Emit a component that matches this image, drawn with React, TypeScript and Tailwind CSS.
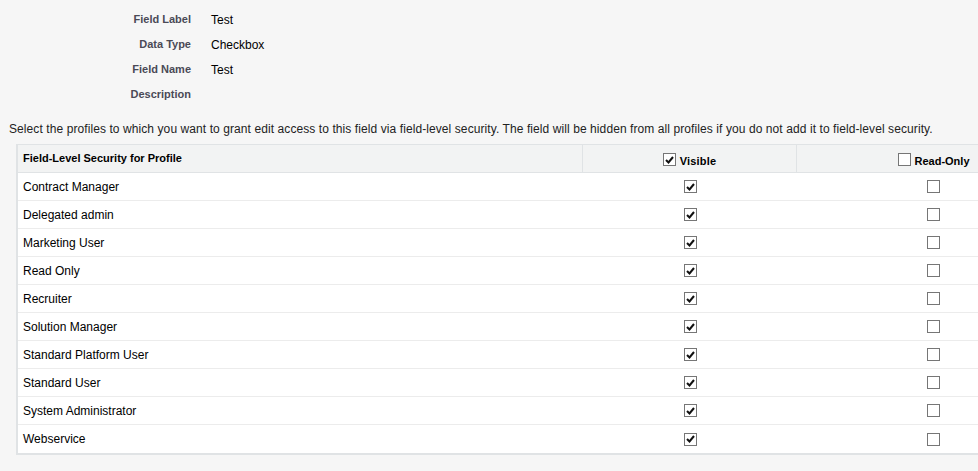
import React from "react";

const profiles = [
  "Contract Manager",
  "Delegated admin",
  "Marketing User",
  "Read Only",
  "Recruiter",
  "Solution Manager",
  "Standard Platform User",
  "Standard User",
  "System Administrator",
  "Webservice",
];

function Box({ checked }: { checked: boolean }) {
  return (
    <span className="inline-flex h-[13px] w-[13px] items-center justify-center border border-[#767676] bg-white">
      {checked && (
        <svg width="9" height="8" viewBox="0 0 9 8">
          <path d="M1 4 L3.5 6.5 L8 1" stroke="#111" strokeWidth="2" fill="none" />
        </svg>
      )}
    </span>
  );
}

export default function App() {
  const info: [string, string][] = [
    ["Field Label", "Test"],
    ["Data Type", "Checkbox"],
    ["Field Name", "Test"],
    ["Description", ""],
  ];
  return (
    <div
      className="h-[471px] w-[978px] overflow-hidden bg-[#f6f6f6] text-[12px] text-black"
      style={{ fontFamily: "Arial, 'Liberation Sans', sans-serif" }}
    >
      <div className="pt-[7px]">
        {info.map(([l, v]) => (
          <div key={l} className="flex h-[25px] items-center">
            <div className="w-[191px] pr-0 text-right text-[11px] font-bold text-[#4a4a56]">{l}</div>
            <div className="pl-[20px] text-[12px] text-black">{v}</div>
          </div>
        ))}
      </div>
      <p className="mt-[14px] whitespace-nowrap pl-[9px] leading-[16px] tracking-[0.085px] text-[#222]">
        Select the profiles to which you want to grant edit access to this field via field-level security. The field will be hidden from all profiles if you do not add it to field-level security.
      </p>
      <div className="ml-[16px] mt-[7px] w-[1055px] border-l-2 border-b-2 border-t border-[#e0e3e5] bg-white">
        <div className="grid h-[28px] grid-cols-[564px_214px_275px] bg-[#f2f3f3] border-b border-[#e0e3e5]">
          <div className="flex items-center pl-[5px] text-[11px] font-bold text-black">
            Field-Level Security for Profile
          </div>
          <div className="flex items-center justify-center gap-[4px] border-l border-[#e0e3e5] pt-[2px] text-[11px] font-bold text-black">
            <Box checked />
            <span className="pt-[3px] tracking-[0.2px]">Visible</span>
          </div>
          <div className="flex items-center justify-center gap-[3px] border-l border-[#e0e3e5] pt-[2px] text-[11px] font-bold text-black">
            <Box checked={false} />
            <span className="pt-[3px]">Read-Only</span>
          </div>
        </div>
        {profiles.map((p, i) => (
          <div
            key={p}
            className={`grid h-[28px] grid-cols-[564px_214px_275px] ${i < profiles.length - 1 ? "border-b border-[#ececec]" : ""}`}
          >
            <div className="flex items-center pl-[5px] text-[12px] text-black">{p}</div>
            <div className="flex items-center justify-center pl-[2px]">
              <Box checked />
            </div>
            <div className="flex items-center justify-center">
              <Box checked={false} />
            </div>
          </div>
        ))}
      </div>
    </div>
  );
}
